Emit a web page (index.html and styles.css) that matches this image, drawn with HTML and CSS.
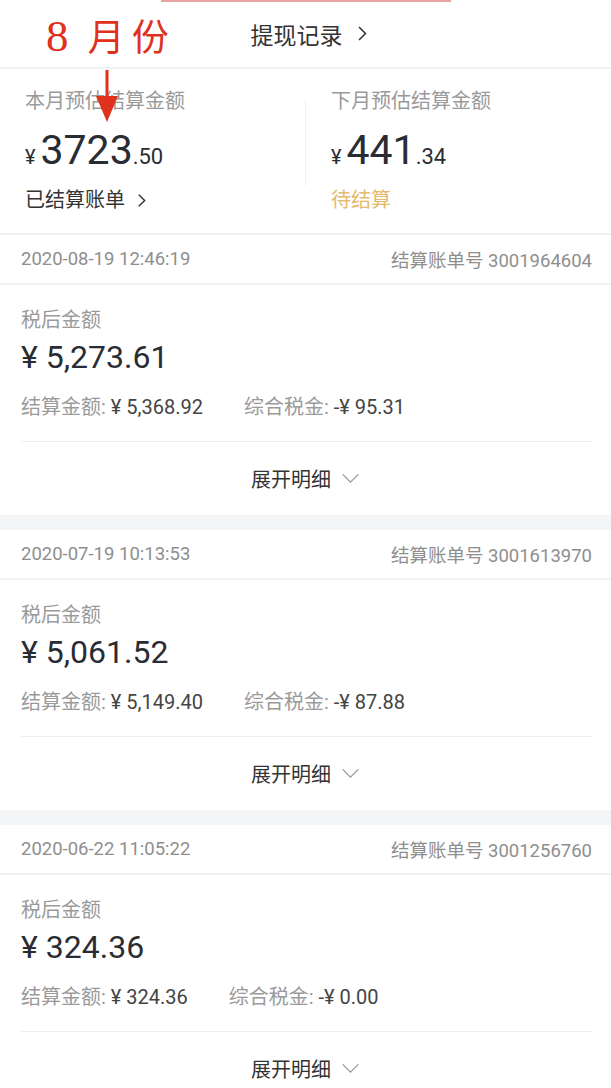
FILE: index.html
```html
<!DOCTYPE html>
<html lang="zh-CN">
<head>
  <meta charset="UTF-8">
  <title>结算账单</title>
  <link rel="stylesheet" href="styles.css">
</head>
<body>
<div class="page">
  <div class="topbar"></div>
  <div class="head">
    <span class="note"><span class="num">8</span> 月份</span>
    <a class="withdraw">提现记录<svg class="chev" viewBox="0 0 10 16" width="10" height="17"><path d="M2 1.5 L8.5 8 L2 14.5" fill="none" stroke="#333" stroke-width="1.5"/></svg></a>
    <!-- 红色箭头标注 -->
    <svg class="arrow" viewBox="0 0 24 54" width="24" height="54"><path d="M12 0 V30" stroke="#e0301e" stroke-width="3"/><path d="M1 26 L23 26 L12 52 Z" fill="#e0301e"/></svg>
  </div>

  <div class="summary">
    <div class="col">
      <div class="label">本月预估结算金额</div>
      <div class="amount"><span class="cur">¥</span><span class="big">3723</span><span class="dec">.50</span></div>
      <a class="link">已结算账单<svg class="chev" viewBox="0 0 10 16" width="9" height="15"><path d="M2 1.5 L8.5 8 L2 14.5" fill="none" stroke="#333" stroke-width="1.6"/></svg></a>
    </div>
    <div class="divider"></div>
    <div class="col">
      <div class="label">下月预估结算金额</div>
      <div class="amount"><span class="cur">¥</span><span class="big">441</span><span class="dec">.34</span></div>
      <span class="pending">待结算</span>
    </div>
  </div>

  <div class="bill">
    <div class="bill-head"><span>2020-08-19 12:46:19</span><span>结算账单号 3001964604</span></div>
    <div class="bill-body">
      <div class="label">税后金额</div>
      <div class="net">¥ 5,273.61</div>
      <div class="detail">
        <span class="item"><span class="k">结算金额:</span> ¥ 5,368.92</span>
        <span class="item"><span class="k">综合税金:</span> -¥ 95.31</span>
      </div>
    </div>
    <div class="expand">展开明细<svg class="down" viewBox="0 0 20 12" width="19" height="11"><path d="M1.5 1.5 L10 10 L18.5 1.5" fill="none" stroke="#999" stroke-width="1.4"/></svg></div>
  </div>

  <div class="bill">
    <div class="bill-head"><span>2020-07-19 10:13:53</span><span>结算账单号 3001613970</span></div>
    <div class="bill-body">
      <div class="label">税后金额</div>
      <div class="net">¥ 5,061.52</div>
      <div class="detail">
        <span class="item"><span class="k">结算金额:</span> ¥ 5,149.40</span>
        <span class="item"><span class="k">综合税金:</span> -¥ 87.88</span>
      </div>
    </div>
    <div class="expand">展开明细<svg class="down" viewBox="0 0 20 12" width="19" height="11"><path d="M1.5 1.5 L10 10 L18.5 1.5" fill="none" stroke="#999" stroke-width="1.4"/></svg></div>
  </div>

  <div class="bill">
    <div class="bill-head"><span>2020-06-22 11:05:22</span><span>结算账单号 3001256760</span></div>
    <div class="bill-body">
      <div class="label">税后金额</div>
      <div class="net">¥ 324.36</div>
      <div class="detail">
        <span class="item"><span class="k">结算金额:</span> ¥ 324.36</span>
        <span class="item"><span class="k">综合税金:</span> -¥ 0.00</span>
      </div>
    </div>
    <div class="expand">展开明细<svg class="down" viewBox="0 0 20 12" width="19" height="11"><path d="M1.5 1.5 L10 10 L18.5 1.5" fill="none" stroke="#999" stroke-width="1.4"/></svg></div>
  </div>
</div>
</body>
</html>
```

FILE: styles.css
```css
* {
  padding: 0;
  margin: 0;
  box-sizing: border-box;
}

body {
  background: #fff;
  font-family: Roboto, "Noto Sans CJK SC", sans-serif;
  color: #333;
  overflow: hidden;
}

.page {
  width: 611px;
}

.topbar {
  width: 290px;
  height: 2px;
  margin: 0 auto;
  background: #e8a3a3;
}

.head {
  height: 67px;
  display: flex;
  align-items: center;
  justify-content: center;
  position: relative;
  border-bottom: 2px solid #f0f0f0;
}

.note {
  position: absolute;
  left: 46px;
  top: 6px;
  font-family: "Liberation Serif", "Noto Sans CJK SC", serif;
  font-size: 37px;
  letter-spacing: 7px;
  color: #e0301e;
}

.note .num {
  font-size: 45px;
  letter-spacing: 3px;
}

.arrow {
  position: absolute;
  left: 95px;
  top: 68px;
  z-index: 2;
}

.withdraw {
  font-size: 23px;
  color: #333;
  display: flex;
  align-items: center;
  margin-top: -2px;
  margin-left: 6px;
}

.withdraw .chev {
  margin-left: 14px;
}

.chev {
  margin-left: 12px;
}

.summary {
  height: 166px;
  display: flex;
  align-items: flex-start;
  border-bottom: 2px solid #f0f0f0;
}

.summary .col {
  flex: 1;
  padding-left: 25px;
  padding-top: 18px;
}

.summary .col + .col {
  padding-left: 24px;
}

.divider {
  width: 1px;
  height: 86px;
  margin-top: 31px;
  background: #f0f0f0;
}

.label {
  font-size: 20px;
  color: #9a9a9a;
  line-height: 28px;
}

.amount {
  display: flex;
  align-items: baseline;
  margin-top: 11px;
  color: #2a2c33;
}

.cur {
  font-size: 20px;
  margin-right: 5px;
}

.big {
  font-size: 41px;
}

.dec {
  font-size: 22px;
}

.link {
  font-size: 20px;
  color: #333;
  display: flex;
  align-items: center;
  line-height: 28px;
  margin-top: 12px;
}

.pending {
  display: block;
  font-size: 20px;
  color: #e6b96c;
  line-height: 28px;
  margin-top: 12px;
}

.bill {
  border-bottom: 15px solid #f4f5f7;
}

.bill-head {
  height: 50px;
  display: flex;
  justify-content: space-between;
  align-items: center;
  padding: 0 19px 0 21px;
  font-size: 18.5px;
  color: #8e8e8e;
  border-bottom: 2px solid #f2f2f2;
}

.bill-body {
  margin: 0 19px 0 21px;
  padding-top: 21px;
  height: 157px;
  border-bottom: 1px solid #efefef;
}

.net {
  font-size: 32px;
  color: #2a2c33;
  line-height: 44px;
  margin-top: 1px;
}

.detail {
  font-size: 20px;
  color: #444;
  line-height: 28px;
  margin-top: 14px;
}

.detail .item + .item {
  margin-left: 36px;
}

.detail .k {
  color: #9a9a9a;
}

.expand {
  height: 73px;
  display: flex;
  align-items: center;
  justify-content: center;
  font-size: 20px;
  color: #333;
}

.down {
  margin-left: 10px;
}
```
